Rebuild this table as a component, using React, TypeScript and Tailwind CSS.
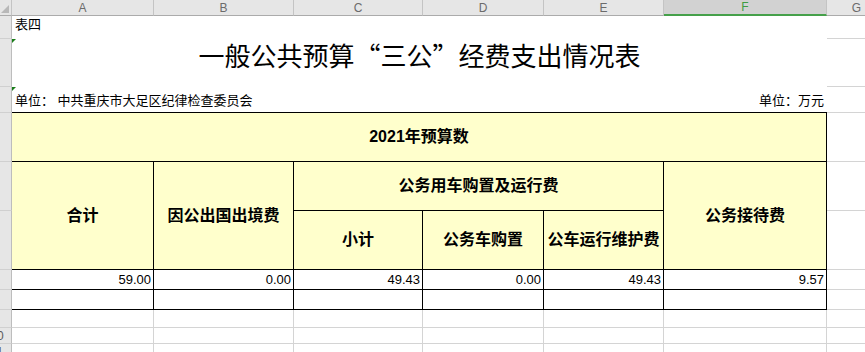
import React from "react";

const letters = ["A", "B", "C", "D", "E", "F", "G"];

// only the last digit of two-digit row numbers peeks out of the narrow row header
function RowHead({ n }: { n: number }) {
  return (
    <td className="p-0 bg-[#e6e6e6] border-r border-b border-r-[#bdbdbd] border-b-[#d0d0d0] align-middle">
      <div className="w-[11px] overflow-hidden">
        {n >= 10 && (
          <div className="w-[30px] -ml-[18px] text-center text-[12px] leading-none text-[#5a5a5a]">
            {n}
          </div>
        )}
      </div>
    </td>
  );
}

function GCell() {
  return <td className="p-0 border-b border-[#d4d4d4]"></td>;
}

function GrayCell() {
  return <td className="p-0 border-r border-b border-[#d4d4d4]"></td>;
}

function Num({ v }: { v?: string }) {
  return (
    <td className="p-0 pr-[2px] pb-[2px] border-r border-b border-black text-right align-bottom text-[13px] leading-[15px] text-black">
      {v}
    </td>
  );
}

function Corner() {
  return (
    <svg width="4" height="4" className="absolute left-0 top-0">
      <polygon points="0,0 4,0 0,4" fill="#187c18" />
    </svg>
  );
}

export default function App() {
  const yellow =
    "p-0 bg-[#ffffcc] border-r border-b border-black text-center align-middle font-bold text-[16px] leading-[18px] text-black";

  return (
    <div className="w-[865px] h-[352px] overflow-hidden bg-white font-['Liberation_Sans','Noto_Sans_CJK_SC',sans-serif]">
      <table className="table-fixed border-separate border-spacing-0 w-[887px]">
        <colgroup>
          <col className="w-[12px]" />
          <col className="w-[142px]" />
          <col className="w-[140px]" />
          <col className="w-[129px]" />
          <col className="w-[121px]" />
          <col className="w-[120px]" />
          <col className="w-[163px]" />
          <col className="w-[60px]" />
        </colgroup>
        <tbody>
          {/* column letters */}
          <tr className="h-[16px]">
            <td className="p-0 bg-[#e6e6e6] border-r border-b border-r-[#c4c4c4] border-b-[#ababab] align-bottom">
              <svg width="11" height="15" className="block">
                <polygon points="1,13 9,13 9,5" fill="#b8b8b8" />
              </svg>
            </td>
            {letters.map((l) =>
              l === "F" ? (
                <td
                  key={l}
                  className="p-0 bg-[#d2d2d2] border-r border-b-2 border-r-[#c4c4c4] border-b-[#45a04a] text-center align-middle text-[12px] leading-none text-[#3e9c43]"
                >
                  {l}
                </td>
              ) : (
                <td
                  key={l}
                  className="p-0 bg-[#e6e6e6] border-r border-b border-r-[#c4c4c4] border-b-[#ababab] text-center align-middle text-[12px] leading-none text-[#6b6b6b]"
                >
                  {l}
                </td>
              )
            )}
          </tr>

          {/* 表四 */}
          <tr className="h-[23px]">
            <RowHead n={1} />
            <td colSpan={6} className="p-0 pl-[3px] pt-[2px] align-top text-[13px] leading-[13px] text-black">
              表四
            </td>
            <GCell />
          </tr>

          {/* title */}
          <tr className="h-[48px]">
            <RowHead n={2} />
            <td
              colSpan={6}
              className="relative p-0 pt-[3px] align-top text-center text-[26px] leading-[26px] text-black font-['Noto_Sans_CJK_SC',sans-serif]"
            >
              <Corner />
              一般公共预算“三公”经费支出情况表
            </td>
            <GCell />
          </tr>

          {/* unit */}
          <tr className="h-[26px]">
            <RowHead n={3} />
            <td colSpan={6} className="relative p-0 pt-[7px] align-top border-b border-black text-[13px] leading-[13px] text-black">
              <Corner />
              <div className="flex justify-between px-[3px]">
                <span>单位： 中共重庆市大足区纪律检查委员会</span>
                <span>单位：万元</span>
              </div>
            </td>
            <GCell />
          </tr>

          {/* 2021年预算数 */}
          <tr className="h-[49px]">
            <RowHead n={4} />
            <td colSpan={6} className={yellow}>
              2021年预算数
            </td>
            <GCell />
          </tr>

          <tr className="h-[49px]">
            <RowHead n={5} />
            <td rowSpan={2} className={yellow}>
              合计
            </td>
            <td rowSpan={2} className={yellow}>
              因公出国出境费
            </td>
            <td colSpan={3} className={yellow}>
              公务用车购置及运行费
            </td>
            <td rowSpan={2} className={yellow}>
              公务接待费
            </td>
            <GCell />
          </tr>

          <tr className="h-[59px]">
            <RowHead n={6} />
            <td className={yellow}>小计</td>
            <td className={yellow}>公务车购置</td>
            <td className={yellow}>公车运行维护费</td>
            <GCell />
          </tr>

          {/* data */}
          <tr className="h-[20px]">
            <RowHead n={7} />
            <Num v="59.00" />
            <Num v="0.00" />
            <Num v="49.43" />
            <Num v="0.00" />
            <Num v="49.43" />
            <Num v="9.57" />
            <GCell />
          </tr>

          <tr className="h-[20px]">
            <RowHead n={8} />
            <Num />
            <Num />
            <Num />
            <Num />
            <Num />
            <Num />
            <GCell />
          </tr>

          {[9, 10, 11].map((n) => (
            <tr key={n} className={n === 9 ? "h-[18px]" : n === 10 ? "h-[16px]" : "h-[17px]"}>
              <RowHead n={n} />
              <GrayCell />
              <GrayCell />
              <GrayCell />
              <GrayCell />
              <GrayCell />
              <GrayCell />
              <GCell />
            </tr>
          ))}
        </tbody>
      </table>
    </div>
  );
}
